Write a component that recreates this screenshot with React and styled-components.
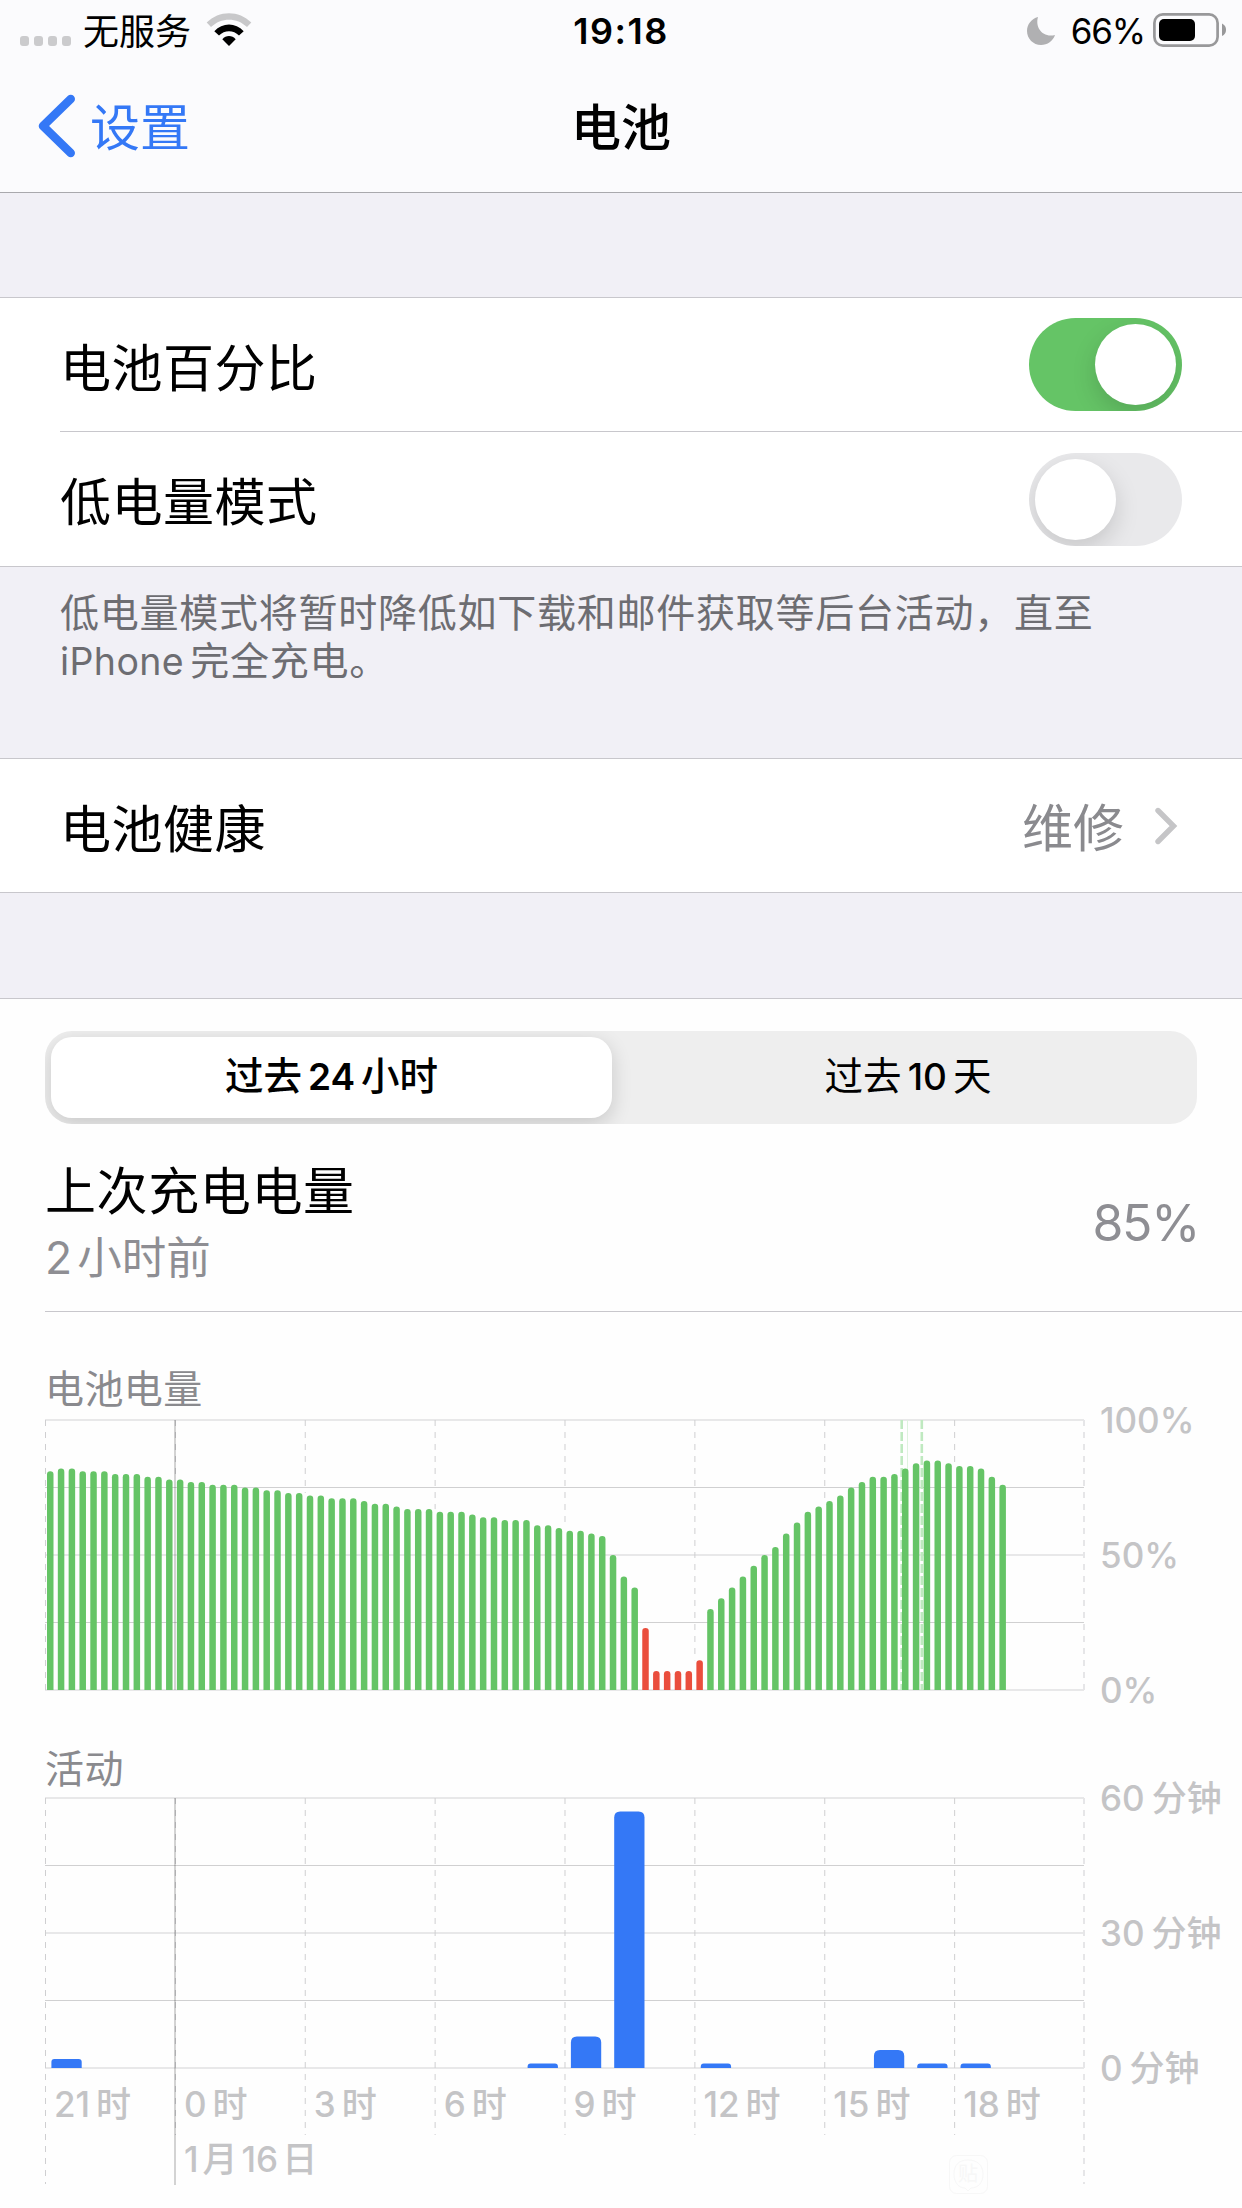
import React from 'react';
import styled, { createGlobalStyle } from 'styled-components';

const LEVELS = [
  81, 82, 82, 81, 81, 81, 80, 80, 80, 79, 79, 78, 78, 77, 77, 76, 76, 76, 75, 75,
  74, 74, 73, 73, 72, 72, 71, 71, 71, 70, 69, 69, 68, 67, 67, 67, 66, 66, 66, 65,
  64, 64, 63, 63, 63, 61, 61, 60, 59, 59, 58, 57, 50, 42, 38, 23, 7, 7, 7, 7,
  11, 30, 34, 38, 42, 46, 50, 53, 58, 62, 66, 68, 70, 72, 75, 77, 79, 79, 80, 82,
  84, 85, 85, 84, 83, 83, 82, 79, 76,
];

// slots that are drawn red
const LOW_FROM = 55;
const LOW_TO = 60;

const ACTIVITY = [
  { hour: 0, minutes: 2 },
  { hour: 11, minutes: 1 },
  { hour: 12, minutes: 7 },
  { hour: 13, minutes: 57 },
  { hour: 15, minutes: 1 },
  { hour: 19, minutes: 4 },
  { hour: 20, minutes: 1 },
  { hour: 21, minutes: 1 },
];

const HOURS = ['21', '0', '3', '6', '9', '12', '15', '18'];

const CHART_LEFT = 45;
const CHART_RIGHT = 1084;
const CHART_HEIGHT = 270;
const COLUMN = (CHART_RIGHT - CHART_LEFT) / 8;
const COLUMNS = [0, 1, 2, 3, 4, 5, 6, 7, 8];

const columnX = (i) => CHART_LEFT + 0.5 + i * COLUMN - (i === 8 ? 0.5 : 0);

function roundedBar(x, top, width, bottom, radius) {
  const r = Math.min(radius, bottom - top);
  return `M${x} ${bottom}V${top + r}Q${x} ${top} ${x + r} ${top}H${x + width - r}Q${x + width} ${top} ${x + width} ${top + r}V${bottom}Z`;
}

function Rows({ top }) {
  return (
    <g>
      {[0, 135, 270].map((y) => (
        <rect key={y} x={CHART_LEFT} y={top + y - 1} width={CHART_RIGHT - CHART_LEFT} height="2" fill="#e8e8e9" />
      ))}
      {[67, 202].map((y) => (
        <rect key={y} x={CHART_LEFT} y={top + y} width={CHART_RIGHT - CHART_LEFT} height="1" fill="#d0d0d1" />
      ))}
    </g>
  );
}

function LevelChart() {
  const top = 10;
  const bottom = top + CHART_HEIGHT;
  const slot = COLUMN / 12;
  const barTop = (value) => bottom - value * 2.7;

  // the dashed lines stop where the bars begin
  const columnEnd = (i) => {
    if (i === 0 || i === 8) return bottom;
    return barTop(Math.max(LEVELS[i * 12 - 1] || 0, LEVELS[i * 12] || 0));
  };

  return (
    <Chart height={300} viewBox="0 0 1242 300">
      <Rows top={top} />
      {COLUMNS.map((i) => (
        <Dashed key={i} $wide={i === 8} x1={columnX(i)} x2={columnX(i)} y1={top} y2={columnEnd(i)} />
      ))}
      <rect x="174" y={top} width="2" height={CHART_HEIGHT} fill="#000" fillOpacity="0.17" />
      <ChargeLine x1="901.7" x2="901.7" y1={top} y2={bottom} />
      <ChargeLine x1="921.8" x2="921.8" y1={top} y2={bottom} />
      <rect x="907" y={top} width="1" height={CHART_HEIGHT} fill="#dff3df" />
      {LEVELS.map((value, i) => (
        <path
          key={i}
          d={roundedBar(47 + i * slot, barTop(value), 6.5, bottom, 3.2)}
          fill={i >= LOW_FROM && i <= LOW_TO ? '#ea4e3d' : '#65c466'}
        />
      ))}
      <AxisText x="1100" y={top + 12.5}>100%</AxisText>
      <AxisText x="1100" y={top + 147.5}>50%</AxisText>
      <AxisText x="1100" y={top + 282.5}>0%</AxisText>
    </Chart>
  );
}

function ActivityChart() {
  const top = 8;
  const bottom = top + CHART_HEIGHT;
  const hourWidth = COLUMN / 3;

  return (
    <Chart height={418} viewBox="0 0 1242 418">
      <Rows top={top} />
      {COLUMNS.map((i) => (
        <Dashed
          key={i}
          $wide={i === 8}
          x1={columnX(i)}
          x2={columnX(i)}
          y1={top}
          y2={i === 0 || i === 8 ? top + 386 : top + 337}
        />
      ))}
      <rect x="174" y={top} width="2" height="387" fill="#000" fillOpacity="0.17" />
      {ACTIVITY.map(({ hour, minutes }) => (
        <path
          key={hour}
          d={roundedBar(51.4 + hour * hourWidth, bottom - minutes * 4.5, 30.3, bottom, minutes > 2 ? 6 : 3)}
          fill="#3478f6"
        />
      ))}
      {['60', '30', '0'].map((value, i) => (
        <AxisText key={value} x="1100" y={top + 12.5 + i * 135}>
          {value}
          <tspan dx="7">分钟</tspan>
        </AxisText>
      ))}
      {HOURS.map((hour, i) => (
        <AxisText key={hour} x={54 + i * COLUMN} y={top + 319}>
          {hour}
          <tspan dx="6">时</tspan>
        </AxisText>
      ))}
      <AxisText x="184" y={top + 374}>
        1<tspan dx="4">月</tspan>
        <tspan dx="4">16</tspan>
        <tspan dx="4">日</tspan>
      </AxisText>
      <g fill="none" stroke="#f7f7f7">
        <rect x="949.5" y="365.500" width="38" height="38" rx="7" />
        <path d="M968 370c-9 0-14 5-14 14s5 14 11 14l3 3 3-3c7 0 12-5 12-14s-6-14-15-14z" />
      </g>
      <Watermark x="958" y="391">贴</Watermark>
    </Chart>
  );
}

function WifiIcon() {
  return (
    <WifiSvg width="46" height="34" viewBox="0 0 46 34">
      <path d="M0.7 9.5C13 -3 33 -3 45.3 9.5L41 14C31 4.200 15 4.200 5 14Z" fill="#c8c8ca" />
      <path d="M8.300 18.200C16.500 9.300 29.500 9.300 37.700 18.200L33 22.500C27.500 16.800 18.500 16.800 13 22.500Z" />
      <path d="M16.300 26.300C20 22 26 22 29.700 26.300L23 33Z" />
    </WifiSvg>
  );
}

function BatteryIcon() {
  return (
    <svg width="74" height="34" viewBox="0 0 74 34">
      <rect x="1.400" y="1.400" width="63.200" height="31.200" rx="8.500" fill="none" stroke="#98989a" strokeWidth="2.700" />
      <rect x="6" y="6" width="36" height="22" rx="5" />
      <path d="M69 10.500q4 2 4 6.300t-4 6.300z" fill="#98989a" />
    </svg>
  );
}

export default function App() {
  return (
    <Page>
      <GlobalStyle />
      <Header>
        <StatusBar>
          <StatusSide>
            <Signal>
              <Dot />
              <Dot />
              <Dot />
              <Dot />
            </Signal>
            <Carrier>无服务</Carrier>
            <WifiIcon />
          </StatusSide>
          <Clock>19:18</Clock>
          <StatusSide $right>
            <MoonSvg width="28" height="28" viewBox="0 0 28 28">
              <path d="M11 0C8 10 15 21 28 18C26 24 20.500 28 14 28C6.300 28 0 21.700 0 14C0 7.500 4.500 1.500 11 0Z" />
            </MoonSvg>
            <Percent>66%</Percent>
            <BatteryIcon />
          </StatusSide>
        </StatusBar>
        <NavBar>
          <Back>
            <svg width="38" height="64" viewBox="0 0 38 64">
              <path d="M32.700 5L5 32L32.700 59" fill="none" stroke="#3478f6" strokeWidth="8.600" strokeLinecap="round" strokeLinejoin="round" />
            </svg>
            <BackText>设置</BackText>
          </Back>
          <Title>电池</Title>
          <span />
        </NavBar>
      </Header>

      <Group $gap={104}>
        <Row $height={133}>
          <Label>电池百分比</Label>
          <Switch $on>
            <Knob />
          </Switch>
        </Row>
        <Divider $left={60} />
        <Row $height={134}>
          <Label>低电量模式</Label>
          <Switch>
            <Knob />
          </Switch>
        </Row>
      </Group>
      <Note>
        低电量模式将暂时降低如下载和邮件获取等后台活动，直至
        <br />
        <NoteLatin>iPhone</NoteLatin>完全充电。
      </Note>

      <Group>
        <Row $height={133}>
          <Label>电池健康</Label>
          <Value>
            <ValueText>维修</ValueText>
            <svg width="24" height="38" viewBox="0 0 24 38">
              <path d="M4 3.500L19.500 19L4 34.500" fill="none" stroke="#c5c5c7" strokeWidth="5.400" strokeLinecap="round" strokeLinejoin="miter" />
            </svg>
          </Value>
        </Row>
      </Group>

      <Usage>
        <Segments>
          <Segment $active>
            <span>
              过去<Num>24</Num>小时
            </span>
          </Segment>
          <Segment>
            <span>
              过去<Num>10</Num>天
            </span>
          </Segment>
        </Segments>
        <LastCharge>
          <div>
            <ChargeTitle>上次充电电量</ChargeTitle>
            <ChargeTime>
              2<span>小时前</span>
            </ChargeTime>
          </div>
          <ChargeValue>85%</ChargeValue>
        </LastCharge>
        <Divider $left={45} />
        <ChartTitle $height={98}>电池电量</ChartTitle>
        <LevelChart />
        <ChartTitle $height={80}>活动</ChartTitle>
        <ActivityChart />
      </Usage>
    </Page>
  );
}

const GlobalStyle = createGlobalStyle`
  * {
    box-sizing: border-box;
  }

  body {
    margin: 0;
    background-color: #f1f0f6;
    font-family: Inter, 'Noto Sans CJK SC', sans-serif;
    color: #000;
  }

  svg {
    display: block;
    flex-shrink: 0;
  }
`;

const Page = styled.div`
  width: 1242px;
  height: 2208px;
  overflow: hidden;
  display: flex;
  flex-direction: column;
`;

const Header = styled.header`
  height: 193px;
  flex-shrink: 0;
  background-color: #fbfbfd;
  border-bottom: 1px solid #a9a9ad;
`;

const StatusBar = styled.div`
  height: 60px;
  display: grid;
  grid-template-columns: 1fr auto 1fr;
  padding: 0 15px;
`;

const StatusSide = styled.div`
  display: flex;
  align-items: flex-start;
  justify-content: ${(props) => (props.$right ? 'flex-end' : 'flex-start')};
  padding-top: 13px;
`;

const Signal = styled.div`
  display: flex;
  gap: 5px;
  margin: 23px 0 0 5px;
`;

const Dot = styled.span`
  width: 9px;
  height: 10px;
  border-radius: 3px;
  background-color: #cbcbcd;
`;

const Carrier = styled.span`
  font-size: 36px;
  line-height: 36px;
  margin: 1px 0 0 12px;
`;

const WifiSvg = styled.svg`
  margin-left: 15px;
`;

const Clock = styled.span`
  font-size: 36px;
  font-weight: 600;
  line-height: 36px;
  letter-spacing: 1.5px;
  padding-top: 13px;
`;

const MoonSvg = styled.svg`
  fill: #b0b0b2;
  margin-top: 4px;
`;

const Percent = styled.span`
  font-size: 35px;
  line-height: 36px;
  letter-spacing: -1.2px;
  margin: 0 8px 0 16px;
`;

const NavBar = styled.nav`
  height: 132px;
  display: grid;
  grid-template-columns: 1fr auto 1fr;
  align-items: center;
  padding: 0 38px;
`;

const Back = styled.a`
  display: flex;
  align-items: center;
  gap: 14px;
  color: #3478f6;
`;

const BackText = styled.span`
  padding-top: 4px;
  font-size: 50px;
  line-height: 60px;
`;

const Title = styled.h1`
  margin: 0;
  padding-top: 3px;
  font-size: 50px;
  font-weight: 500;
  line-height: 60px;
`;

const Group = styled.section`
  flex-shrink: 0;
  margin-top: ${(props) => props.$gap || 0}px;
  background-color: #fff;
  border-top: 1px solid #c8c7cc;
  border-bottom: 1px solid #c8c7cc;
`;

const Row = styled.div`
  height: ${(props) => props.$height}px;
  display: flex;
  align-items: center;
  justify-content: space-between;
  padding: 0 60px;
`;

const Label = styled.span`
  padding-top: 8px;
  font-size: 51px;
  line-height: 60px;
  letter-spacing: 0.5px;
`;

const Divider = styled.hr`
  height: 1px;
  margin: 0 0 0 ${(props) => props.$left}px;
  border: 0;
  background-color: #c8c7cc;
`;

const Switch = styled.div`
  width: 153px;
  height: 93px;
  display: flex;
  justify-content: ${(props) => (props.$on ? 'flex-end' : 'flex-start')};
  padding: 6px;
  border-radius: 47px;
  background-color: ${(props) => (props.$on ? '#65c466' : '#e9e9eb')};
  overflow: hidden;
`;

const Knob = styled.span`
  width: 81px;
  height: 81px;
  border-radius: 50%;
  background-color: #fff;
  box-shadow: 0 9px 24px rgba(0, 0, 0, 0.15);
`;

const Note = styled.p`
  height: 191px;
  flex-shrink: 0;
  margin: 0;
  padding: 22px 60px 0;
  font-size: 39px;
  line-height: 48px;
  letter-spacing: 0.75px;
  white-space: nowrap;
  color: #6d6d72;
`;

const NoteLatin = styled.span`
  font-size: 37.5px;
  letter-spacing: 0.4px;
  margin-right: 6px;
`;

const Value = styled.div`
  display: flex;
  align-items: center;
  gap: 30px;
  padding-right: 4px;
  color: #8a8a8e;
`;

const ValueText = styled.span`
  padding-top: 7px;
  font-size: 51px;
  line-height: 60px;
`;

const Usage = styled.section`
  flex: 1;
  margin-top: 105px;
  padding-top: 32px;
  background-color: #fefefe;
  border-top: 1px solid #c8c7cc;
`;

const Segments = styled.div`
  height: 93px;
  display: grid;
  grid-template-columns: 561px 1fr;
  margin: 0 45px;
  padding: 6px;
  border-radius: 27px;
  background-color: #eee;
  overflow: hidden;
`;

const Segment = styled.div`
  display: flex;
  align-items: center;
  justify-content: center;
  padding: 0 0 3px ${(props) => (props.$active ? 0 : 13)}px;
  border-radius: 21px;
  font-size: 38.5px;
  font-weight: 500;
  line-height: 48px;
  background-color: ${(props) => (props.$active ? '#fff' : 'transparent')};
  box-shadow: ${(props) => (props.$active ? '0 6px 20px rgba(0, 0, 0, 0.16)' : 'none')};

  ${(props) => !props.$active && 'font-weight: 400;'}
`;

const Num = styled.span`
  margin: 0 6px;
  font-size: 37px;
  font-weight: ${(props) => props.$weight || 600};

  ${Segment}:last-child & {
    font-weight: 500;
  }
`;

const LastCharge = styled.div`
  height: 187px;
  display: flex;
  justify-content: space-between;
  padding: 34px 43px 0 45px;
`;

const ChargeTitle = styled.div`
  font-size: 51px;
  line-height: 68px;
  letter-spacing: 0.6px;
`;

const ChargeTime = styled.div`
  font-size: 44.5px;
  line-height: 64px;
  color: #8e8e93;

  span {
    margin-left: 5px;
  }
`;

const ChargeValue = styled.div`
  font-size: 50px;
  line-height: 60px;
  letter-spacing: -1.3px;
  padding-top: 35px;
  color: #8e8e93;
`;

const ChartTitle = styled.h2`
  height: ${(props) => props.$height}px;
  display: flex;
  align-items: flex-end;
  margin: 0;
  padding: 0 45px;
  font-size: 39px;
  font-weight: 400;
  line-height: 42px;
  letter-spacing: 0.4px;
  color: #8a8a8e;
`;

const Chart = styled.svg`
  width: 1242px;
  overflow: visible;
`;

const Dashed = styled.line`
  stroke: ${(props) => (props.$wide ? '#e6e6e8' : '#cfcfd1')};
  stroke-width: ${(props) => (props.$wide ? 2 : 1)};
  stroke-dasharray: 6 6;
`;

const ChargeLine = styled.line`
  stroke: #bfe9c0;
  stroke-width: 2.6;
  stroke-dasharray: 9 3;
`;

const AxisText = styled.text`
  font-size: 35px;
  font-weight: 500;
  fill: #c4c4c6;
`;

const Watermark = styled.text`
  font-size: 20px;
  fill: #f7f7f7;
`;
